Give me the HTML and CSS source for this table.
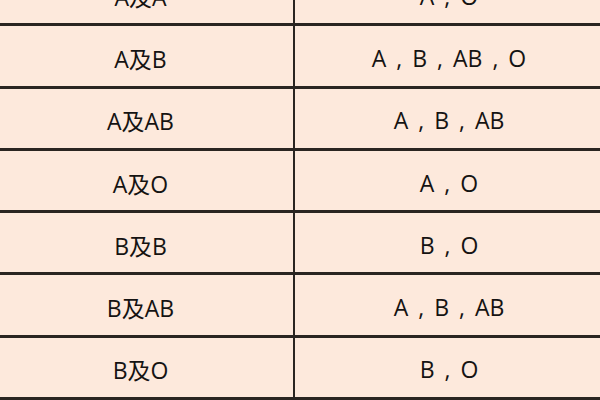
FILE: index.html
```html
<!DOCTYPE html>
<html lang="zh">
<head>
<meta charset="utf-8">
<link rel="stylesheet" href="styles.css">
</head>
<body>
<div class="table">
  <div class="row"><div class="cell left">A及A</div><div class="cell right">A , O</div></div>
  <div class="row"><div class="cell left">A及B</div><div class="cell right">A , B , AB , O</div></div>
  <div class="row"><div class="cell left">A及AB</div><div class="cell right">A , B , AB</div></div>
  <div class="row"><div class="cell left">A及O</div><div class="cell right">A , O</div></div>
  <div class="row"><div class="cell left">B及B</div><div class="cell right">B , O</div></div>
  <div class="row"><div class="cell left">B及AB</div><div class="cell right">A , B , AB</div></div>
  <div class="row"><div class="cell left">B及O</div><div class="cell right">B , O</div></div>
</div>
</body>
</html>
```
FILE: styles.css
```css
html, body {
  margin: 0;
  padding: 0;
  background: #fde9dc;
  overflow: hidden;
}
.table {
  margin-top: -36px;
  margin-left: -12px;
  width: 615px;
  display: flex;
  flex-direction: column;
  font-family: "Open Sans", "Noto Sans CJK SC", sans-serif;
  font-size: 23px;
  color: #151312;
}
.row {
  display: grid;
  grid-template-columns: 307px 1fr;
  height: 62.3px;
  box-sizing: border-box;
  border-bottom: 3px solid #2a2521;
}
.cell {
  display: flex;
  align-items: center;
  justify-content: center;
  padding-top: 4px;
}
.left {
  border-right: 2px solid #2a2521;
}
.right {
  word-spacing: 4px;
}
```
